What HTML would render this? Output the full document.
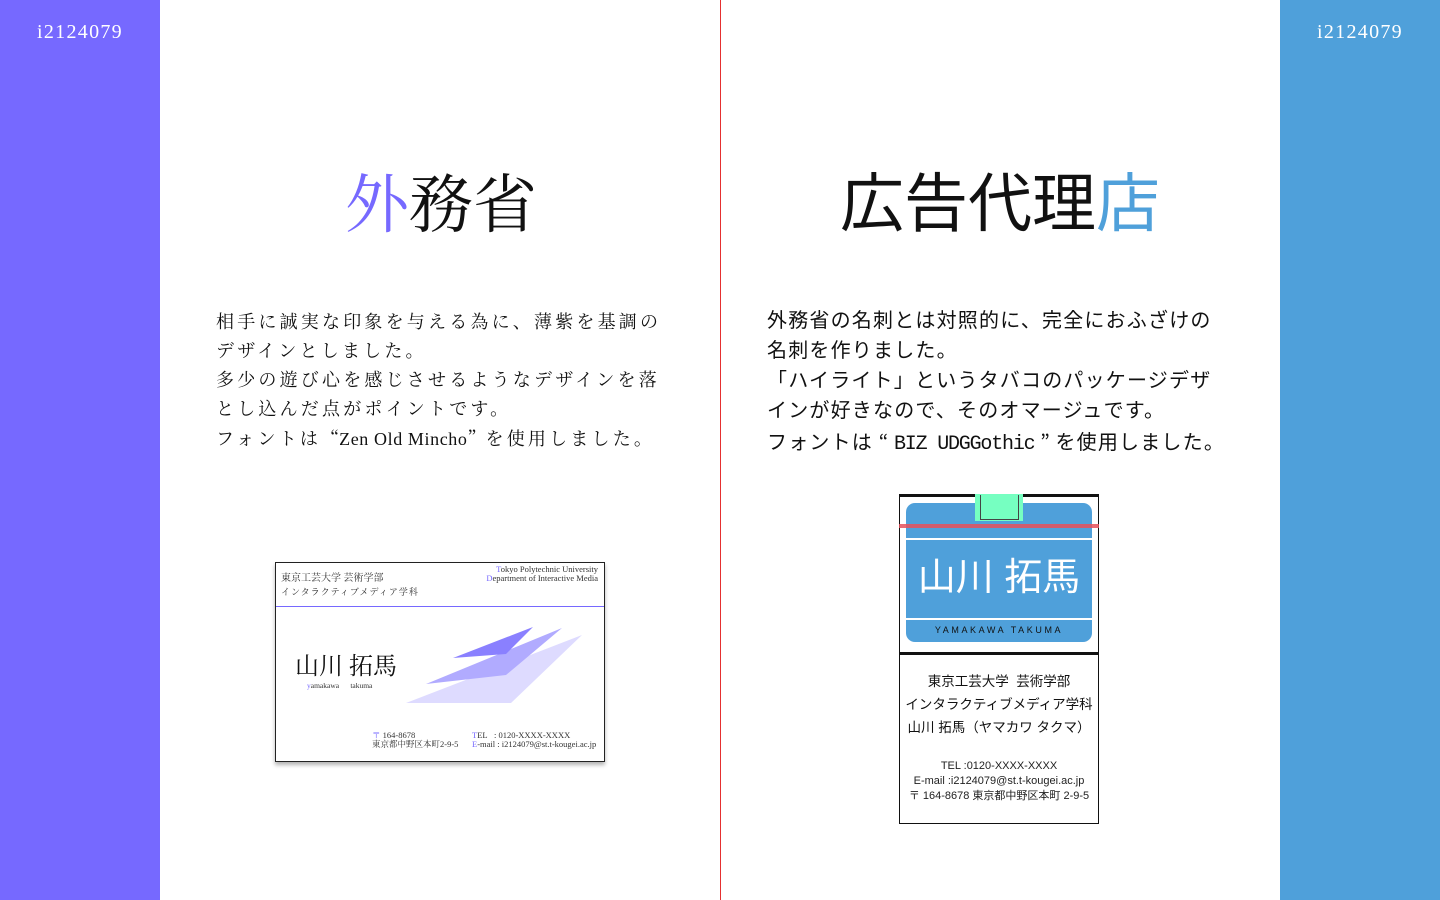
<!DOCTYPE html>
<html><head><meta charset="utf-8"><style>
*{margin:0;padding:0;box-sizing:border-box}
body{width:1440px;height:900px;position:relative;background:#fff;overflow:hidden;font-family:"Liberation Sans","Noto Sans CJK JP",sans-serif;color:#111}
.a{position:absolute;white-space:nowrap}
.serif{font-family:"Liberation Serif","Noto Serif CJK SC",serif}
.q{font-family:"Noto Sans CJK JP",sans-serif;display:inline-block;width:21px;text-align:center;letter-spacing:0}
.qs{font-family:"Noto Serif CJK SC",serif}
</style></head><body>
<div class="a" style="left:0;top:0;width:160px;height:900px;background:#7669FF"></div>
<div class="a" style="left:1280px;top:0;width:160px;height:900px;background:#4FA0DA"></div>
<div class="a" style="left:720px;top:0;width:1px;height:900px;background:#e53030"></div>
<div class="a serif" style="left:0;width:160px;top:21px;text-align:center;color:#fff;font-size:20px;letter-spacing:1.3px">i2124079</div>
<div class="a serif" style="left:1280px;width:160px;top:21px;text-align:center;color:#fff;font-size:20px;letter-spacing:1.3px">i2124079</div>

<div class="a serif" style="left:345px;top:163px;font-size:64px;line-height:86px"><span style="color:#7669FF">外</span>務省</div>
<div class="a" style="left:840px;top:161px;font-size:64px;line-height:86px">広告代理<span style="color:#4FA0DA">店</span></div>

<div class="a serif" style="left:216px;top:308px;font-size:18px;line-height:29px;letter-spacing:3.2px">相手に誠実な印象を与える為に、薄紫を基調の<br>デザインとしました。<br>多少の遊び心を感じさせるようなデザインを落<br>とし込んだ点がポイントです。<br>フォントは<span class="qs" style="letter-spacing:0">“</span><span style="letter-spacing:0.6px">Zen Old Mincho</span><span class="qs" style="letter-spacing:0">”</span>を使用しました。</div>

<div class="a" style="left:767px;top:306px;font-size:20px;line-height:30px;letter-spacing:1.2px">外務省の名刺とは対照的に、完全におふざけの<br>名刺を作りました。<br>「ハイライト」というタバコのパッケージデザ<br>インが好きなので、そのオマージュです。<br>フォントは<span class="q">“</span><span style="font-family:'Liberation Mono',monospace;letter-spacing:-1.2px">BIZ UDGGothic</span><span class="q">”</span>を使用しました。</div>

<!-- left card -->
<div class="a serif" style="left:275px;top:562px;width:330px;height:200px;border:1px solid #222;background:#fff;box-shadow:0 3px 4px rgba(0,0,0,.3)">
 <div class="a" style="left:5px;top:6px;font-size:10px;color:#333">東京工芸大学 芸術学部</div>
 <div class="a" style="left:5px;top:22px;font-size:9px;color:#333;letter-spacing:1px">インタラクティブメディア学科</div>
 <div class="a" style="right:6px;top:2px;font-size:8.5px;line-height:9px;text-align:right;color:#333"><span style="color:#7669FF">T</span>okyo Polytechnic University<br><span style="color:#7669FF">D</span>epartment of Interactive Media</div>
 <div class="a" style="left:0;top:43px;width:328px;height:1px;background:#7669FF"></div>
 <div class="a" style="left:19px;top:83px;font-size:24px;color:#111">山川 拓馬</div>
 <div class="a" style="left:31px;top:118px;font-size:7.5px;color:#333"><span style="color:#7669FF">y</span>amakawa&nbsp;&nbsp;&nbsp;&nbsp;&nbsp;&nbsp;takuma</div>
 <svg class="a" style="left:0;top:0" width="328" height="198">
  <polygon points="130,140 306,72 235,140" fill="#dedbff"/>
  <polygon points="150,121 286,65 230,112" fill="#b1abff"/>
  <polygon points="177,95 257,64 230,91" fill="#8a80ff"/>
 </svg>
 <div class="a" style="left:96px;top:168px;font-size:8.5px;line-height:9px;color:#333"><span style="color:#7669FF">〒</span> 164-8678<br>東京都中野区本町2-9-5</div>
 <div class="a" style="left:196px;top:168px;font-size:8.5px;line-height:9px;color:#333"><span style="color:#7669FF">T</span>EL&nbsp;&nbsp;&nbsp;: 0120-XXXX-XXXX<br><span style="color:#7669FF">E</span>-mail : i2124079@st.t-kougei.ac.jp</div>
</div>

<!-- right card -->
<div class="a" style="left:899px;top:494px;width:200px;height:330px;border:1px solid #111;border-top:3px solid #111;background:#fff">
 <div class="a" style="left:6px;top:6px;width:186px;height:139px;background:#4FA0DA;border-radius:9px"></div>
 <div class="a" style="left:6px;top:41px;width:186px;height:2px;background:#fff"></div>
 <div class="a" style="left:6px;top:121px;width:186px;height:2px;background:#fff"></div>
 <div class="a" style="left:75px;top:-3px;width:48px;height:27px;background:#76FFC1"></div>
 <div class="a" style="left:80px;top:-2px;width:39px;height:25px;border:1px solid #444;border-top:none"></div>
 <div class="a" style="left:-1px;top:27px;width:200px;height:4px;background:rgba(230,80,90,.85)"></div>
 <div class="a" style="left:0;width:198px;top:56px;text-align:center;color:#fff;font-size:38px;line-height:50px">山川 拓馬</div>
 <div class="a" style="left:0;width:198px;top:128px;text-align:center;color:#111;font-size:9px;letter-spacing:2.6px">YAMAKAWA TAKUMA</div>
 <div class="a" style="left:-1px;top:155px;width:200px;height:3px;background:#111"></div>
 <div class="a" style="left:0;width:198px;top:173px;text-align:center;font-size:13.5px;line-height:23px;color:#111">東京工芸大学&nbsp;&nbsp;芸術学部<br>インタラクティブメディア学科<br>山川 拓馬（ヤマカワ タクマ）</div>
 <div class="a" style="left:0;width:198px;top:262px;text-align:center;font-size:11px;line-height:15px;color:#222">TEL :0120-XXXX-XXXX<br>E-mail :i2124079@st.t-kougei.ac.jp<br>〒 164-8678 東京都中野区本町 2-9-5</div>
</div>
</body></html>
